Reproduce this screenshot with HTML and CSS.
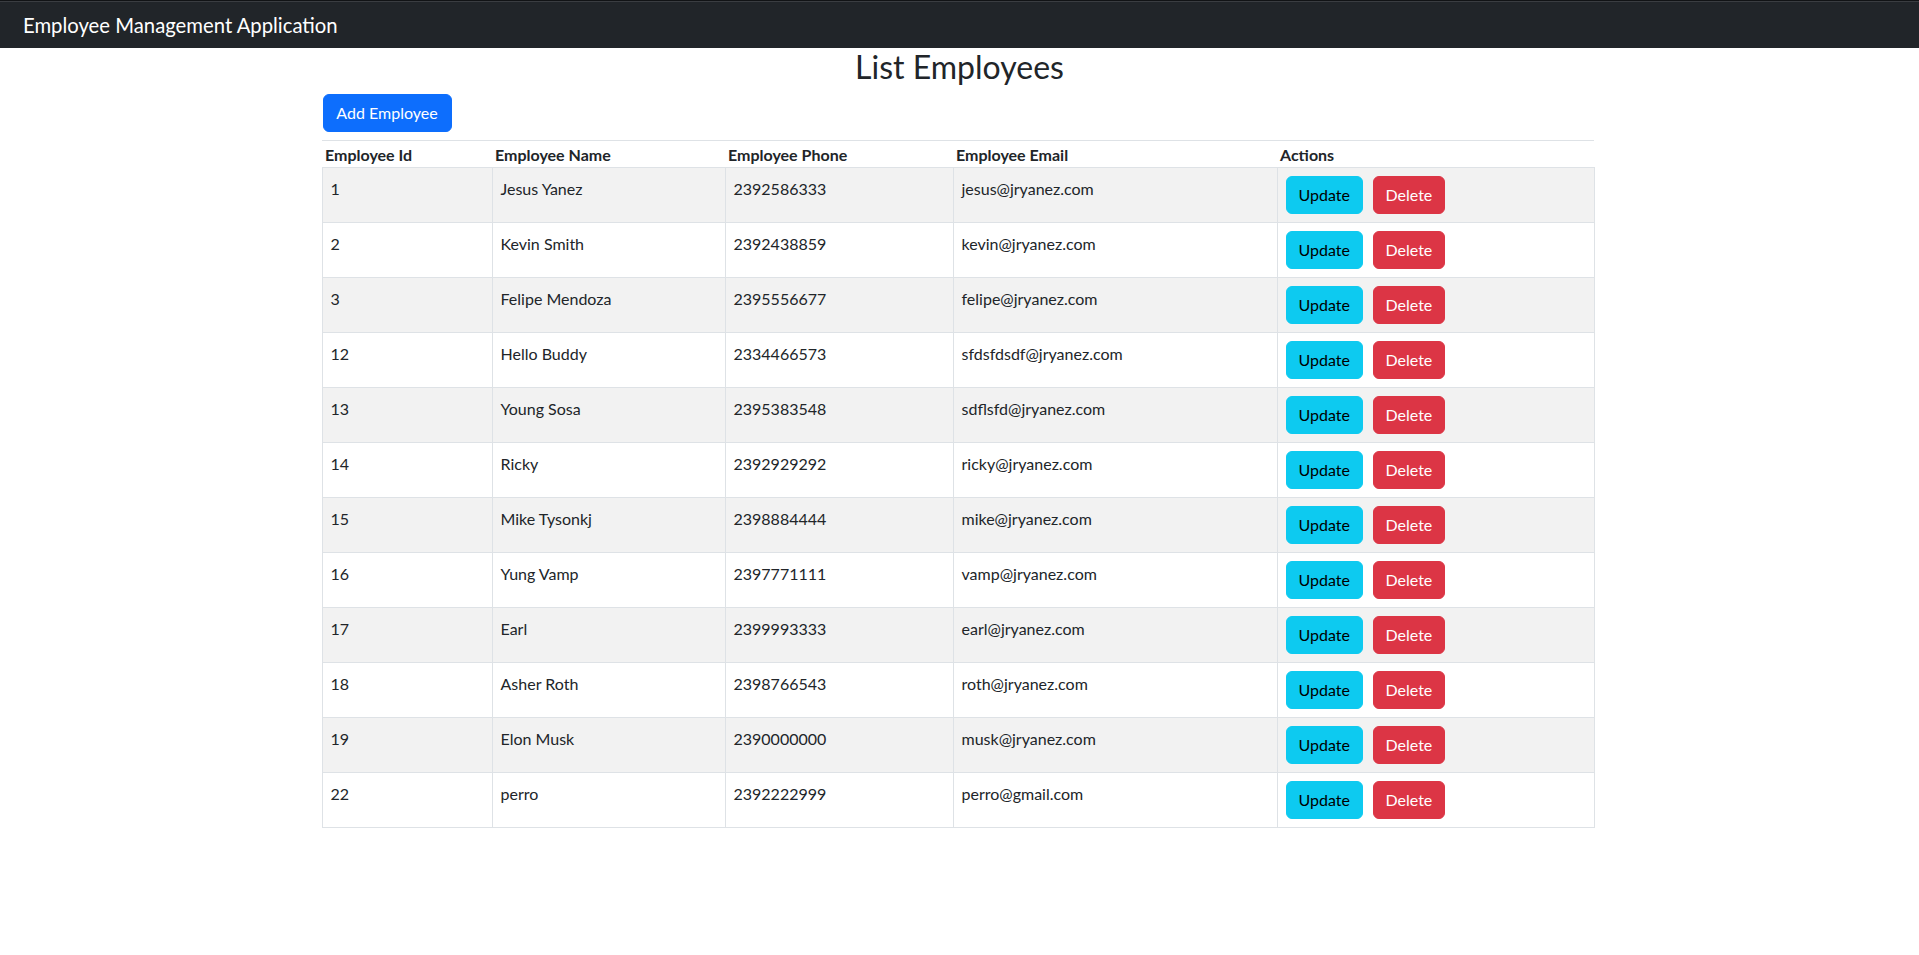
FILE: index.html
```html
<!DOCTYPE html>
<html lang="en">
<head>
<meta charset="utf-8">
<title>Employee Management Application</title>
<link rel="stylesheet" href="styles.css">
</head>
<body>
<header class="navbar">
  <span class="brand">Employee Management Application</span>
</header>
<h2 class="title">List Employees</h2>
<main class="container">
  <div class="toolbar">
    <button class="btn btn-primary">Add Employee</button>
  </div>
  <table class="table">
    <colgroup>
      <col class="c-id"><col class="c-name"><col class="c-phone"><col class="c-email"><col class="c-actions">
    </colgroup>
    <thead>
      <tr><th>Employee Id</th><th>Employee Name</th><th>Employee Phone</th><th>Employee Email</th><th>Actions</th></tr>
    </thead>
    <tbody>
      <tr><td>1</td><td>Jesus Yanez</td><td>2392586333</td><td>jesus@jryanez.com</td><td class="actions"><button class="btn btn-info">Update</button><button class="btn btn-danger">Delete</button></td></tr>
      <tr><td>2</td><td>Kevin Smith</td><td>2392438859</td><td>kevin@jryanez.com</td><td class="actions"><button class="btn btn-info">Update</button><button class="btn btn-danger">Delete</button></td></tr>
      <tr><td>3</td><td>Felipe Mendoza</td><td>2395556677</td><td>felipe@jryanez.com</td><td class="actions"><button class="btn btn-info">Update</button><button class="btn btn-danger">Delete</button></td></tr>
      <tr><td>12</td><td>Hello Buddy</td><td>2334466573</td><td>sfdsfdsdf@jryanez.com</td><td class="actions"><button class="btn btn-info">Update</button><button class="btn btn-danger">Delete</button></td></tr>
      <tr><td>13</td><td>Young Sosa</td><td>2395383548</td><td>sdflsfd@jryanez.com</td><td class="actions"><button class="btn btn-info">Update</button><button class="btn btn-danger">Delete</button></td></tr>
      <tr><td>14</td><td>Ricky</td><td>2392929292</td><td>ricky@jryanez.com</td><td class="actions"><button class="btn btn-info">Update</button><button class="btn btn-danger">Delete</button></td></tr>
      <tr><td>15</td><td>Mike Tysonkj</td><td>2398884444</td><td>mike@jryanez.com</td><td class="actions"><button class="btn btn-info">Update</button><button class="btn btn-danger">Delete</button></td></tr>
      <tr><td>16</td><td>Yung Vamp</td><td>2397771111</td><td>vamp@jryanez.com</td><td class="actions"><button class="btn btn-info">Update</button><button class="btn btn-danger">Delete</button></td></tr>
      <tr><td>17</td><td>Earl</td><td>2399993333</td><td>earl@jryanez.com</td><td class="actions"><button class="btn btn-info">Update</button><button class="btn btn-danger">Delete</button></td></tr>
      <tr><td>18</td><td>Asher Roth</td><td>2398766543</td><td>roth@jryanez.com</td><td class="actions"><button class="btn btn-info">Update</button><button class="btn btn-danger">Delete</button></td></tr>
      <tr><td>19</td><td>Elon Musk</td><td>2390000000</td><td>musk@jryanez.com</td><td class="actions"><button class="btn btn-info">Update</button><button class="btn btn-danger">Delete</button></td></tr>
      <tr><td>22</td><td>perro</td><td>2392222999</td><td>perro@gmail.com</td><td class="actions"><button class="btn btn-info">Update</button><button class="btn btn-danger">Delete</button></td></tr>
    </tbody>
  </table>
</main>
</body>
</html>
```
FILE: styles.css
```css
* { box-sizing: border-box; }
body {
  margin: 0;
  font-family: Lato, "Liberation Sans", sans-serif;
  font-size: 16px;
  line-height: 1.5;
  color: #212529;
  background: #fff;
}
.navbar {
  height: 48px;
  background: #212529;
  border-top: 1px solid #111315;
  box-shadow: inset 0 1px 0 #3a3d41;
  display: flex;
  align-items: center;
  padding: 0 0 0 23px;
}
.brand {
  color: #fff;
  font-size: 20.3px;
  line-height: 30px;
}
.title {
  margin: 0 0 8px;
  font-size: 32px;
  font-weight: 400;
  line-height: 1.2;
  text-align: center;
  height: 38px;
}
.container {
  width: 1276px;
  margin: 0 auto;
  padding-right: 4px;
}
.toolbar {
  display: flex;
  margin-bottom: 8px;
  padding-left: 1px;
}
.btn {
  font-family: inherit;
  font-size: 16px;
  line-height: 24px;
  height: 38px;
  padding: 6px 12px;
  border: 1px solid transparent;
  border-radius: 6px;
  cursor: pointer;
}
.btn-primary { background: #0d6efd; border-color: #0d6efd; color: #fff; width: 129px; }
.btn-info { background: #0dcaf0; border-color: #0dcaf0; color: #000; width: 77px; }
.btn-danger { background: #dc3545; border-color: #dc3545; color: #fff; width: 72px; margin-left: 10px; }
.table {
  width: 1272px;
  border-collapse: collapse;
  table-layout: fixed;
}
.c-id { width: 170px; }
.c-name { width: 233px; }
.c-phone { width: 228px; }
.c-email { width: 324px; }
.c-actions { width: 317px; }
.table thead th {
  text-align: left;
  vertical-align: top;
  font-weight: 700;
  padding: 2px 3px 0;
  height: 27px;
  line-height: 24px;
  border-top: 1px solid #dee2e6;
  white-space: nowrap;
}
.table tbody td {
  border: 1px solid #dee2e6;
  padding: 9px 8px 7px;
  height: 55px;
  line-height: 24px;
  vertical-align: top;
}
.table tbody td.actions {
  padding: 8px;
  white-space: nowrap;
}
.table tbody tr:nth-child(odd) td {
  background: #f2f2f2;
}
```
